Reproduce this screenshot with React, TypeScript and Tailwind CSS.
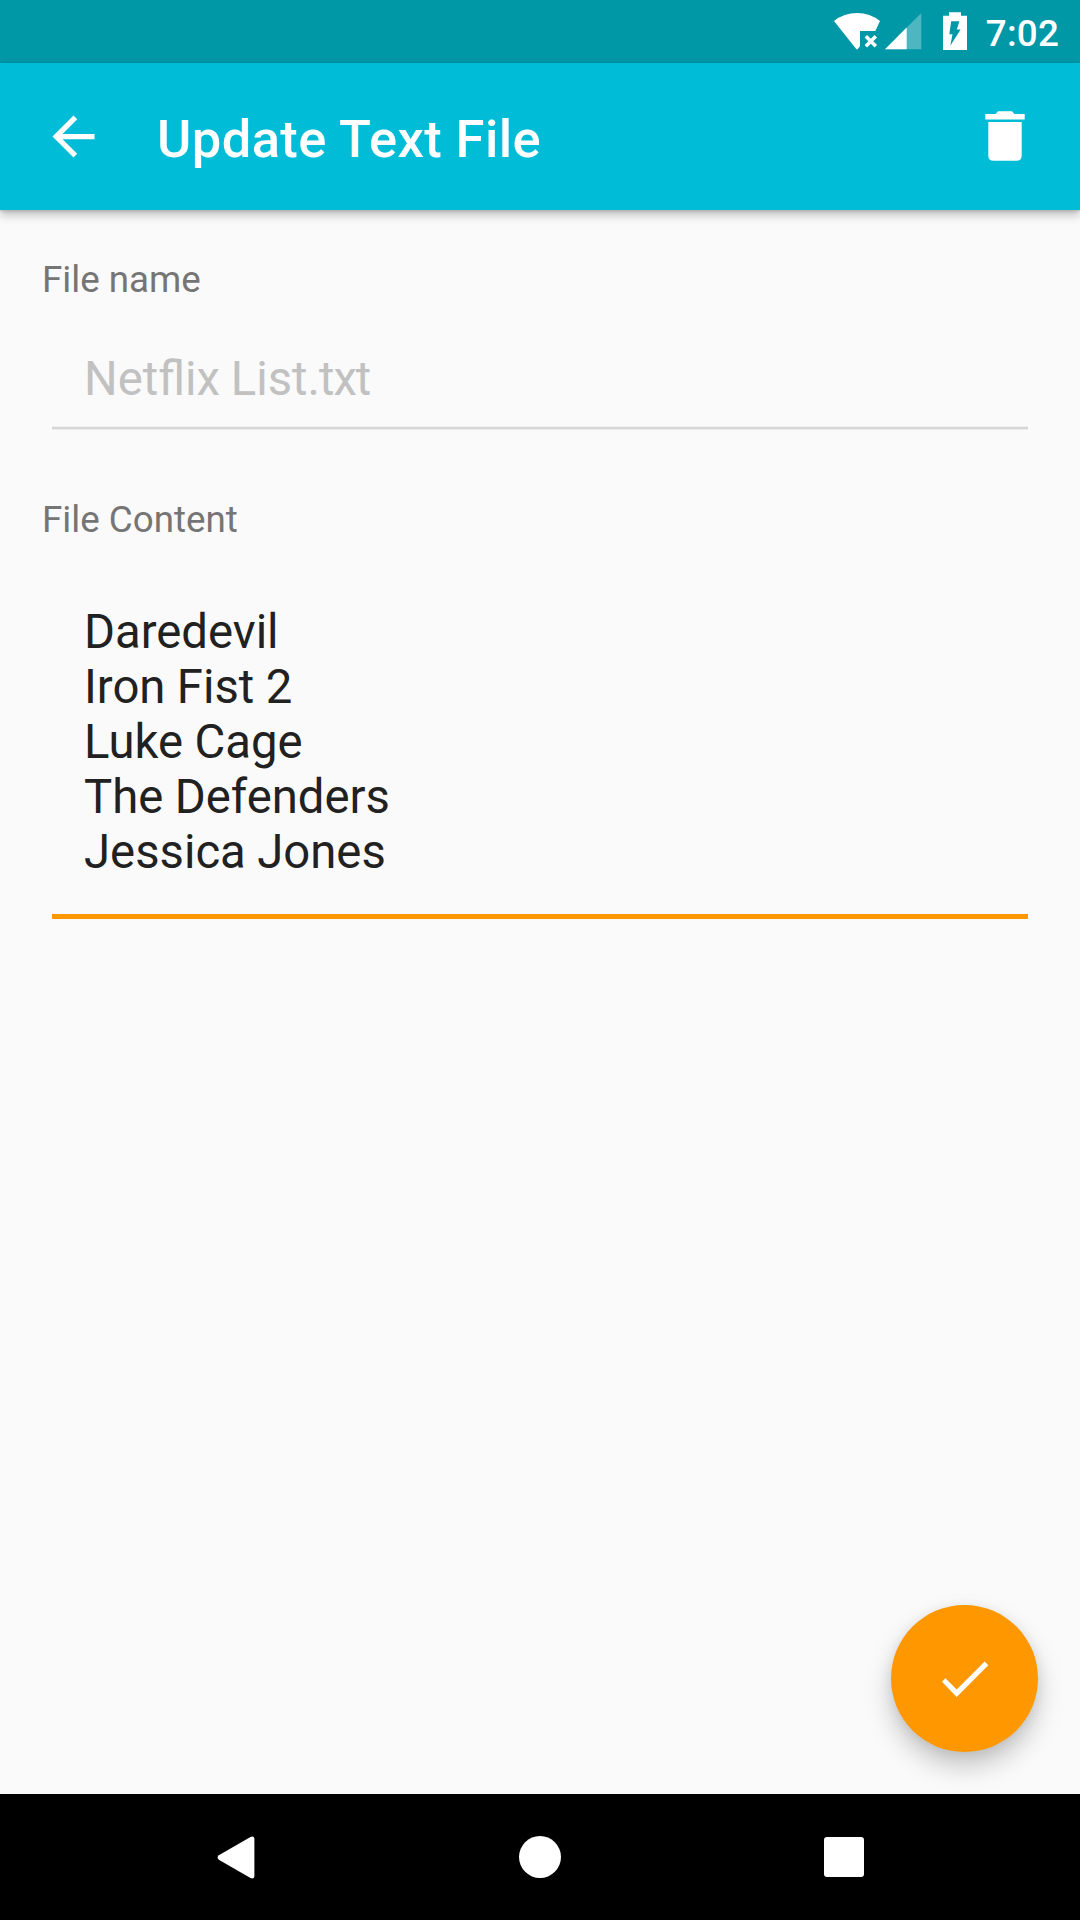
const titles = ["Daredevil", "Iron Fist 2", "Luke Cage", "The Defenders", "Jessica Jones"];

function StatusBar() {
  return (
    <div className="flex h-[63px] shrink-0 items-start justify-end bg-[#0097a7] pr-[21px] text-white">
      <svg className="h-[63px] w-[150px]" viewBox="826 0 150 63" fill="currentColor">
        <path d="M834 21Q844 13 857 13T880 21L875.3 31H860V46.3L858 48.8Q857 50 856 48.8Z" />
        <path d="M865.8 36.3l10 10m0-10l-10 10" stroke="currentColor" strokeWidth="3.5" fill="none" />
        <path d="M885 49.3L921.3 13V49.3Z" opacity="0.3" />
        <path d="M885 49.3L906.7 27.6V49.3Z" />
        <path
          fillRule="evenodd"
          d="M949 12.3h12v3.4h6V50h-24V15.7h6ZM951.2 21.2L949.3 34.3H952.5L950.3 45.8L960.6 29.6H956.8L959.4 21.2Z"
        />
      </svg>
      <span className="ml-[10px] text-[36.75px] leading-[67px] font-medium tracking-[0.2px]">7:02</span>
    </div>
  );
}

function AppBar() {
  return (
    <header className="relative z-10 flex h-[147px] shrink-0 items-center bg-[#00bcd7] pr-[42px] pl-[42px] text-white shadow-[0_5px_9px_rgba(0,0,0,0.24),0_1px_3px_rgba(0,0,0,0.16)]">
      <button aria-label="Back" className="size-[63px]">
        <svg className="size-[63px]" viewBox="0 0 24 24" fill="currentColor">
          <path d="M20 11H7.83l5.59-5.59L12 4l-8 8 8 8 1.41-1.41L7.83 13H20v-2z" />
        </svg>
      </button>
      <h1 className="ml-[52px] flex-1 pt-[5px] text-[52.5px] leading-[62px] font-medium tracking-[0.4px]">Update Text File</h1>
      <button aria-label="Delete" className="size-[66px]">
        <svg className="size-[66px]" viewBox="972 104 66 66" fill="currentColor">
          <path d="M985.3 114H995.5L998 111.2H1012L1014.5 114H1024.7V119.6H985.3Z" />
          <path d="M988.3 122H1021.7V155.5Q1021.7 160.8 1016.4 160.8H993.6Q988.3 160.8 988.3 155.5Z" />
        </svg>
      </button>
    </header>
  );
}

function NavBar() {
  return (
    <nav className="flex h-[126px] shrink-0 items-center justify-between bg-black px-[205px] text-white">
      <svg className="size-[63px]" viewBox="205 1825.5 63 63" fill="currentColor">
        <path d="M218.8 1854.8L250.5 1836.5Q254.4 1835 254.4 1839V1875Q254.4 1879 250.5 1877.5L218.8 1859.2Q216.4 1857 218.8 1854.8Z" />
      </svg>
      <span className="size-[42px] rounded-full bg-white" />
      <span className="flex w-[63px] justify-center">
        <span className="size-[40px] rounded-[3px] bg-white" />
      </span>
    </nav>
  );
}

export default function App() {
  return (
    <div className="flex h-[1920px] w-[1080px] flex-col overflow-hidden bg-[#fafafa] font-['Roboto',sans-serif]">
      <StatusBar />
      <AppBar />
      <main className="relative flex-1 px-[42px] pt-[48px]">
        <div className="text-[36.75px] leading-[43px] text-[#757575]">File name</div>
        <div className="mx-[10px] mt-[51px] border-b-2 border-[#d6d6d6] pb-[20px] pl-[32px] text-[47.25px] leading-[55px] text-[#c1c1c1] shadow-[0_1px_0_#ececec,inset_0_-1px_0_#f0f0f0] [word-spacing:-1px]">
          Netflix List<span className="tracking-[-1px]">.txt</span>
        </div>
        <div className="mt-[69px] text-[36.75px] leading-[43px] text-[#757575]">File Content</div>
        <div className="mx-[10px] mt-[64px] border-b-5 border-[#ff9800] pb-[34px] pl-[32px] text-[47.25px] leading-[55px] text-[#212121] [word-spacing:-0.3px]">
          {titles.map((title) => (
            <div key={title}>{title}</div>
          ))}
        </div>
        <button
          aria-label="Save"
          className="absolute right-[42px] bottom-[42px] size-[147px] rounded-full bg-[#ff9800] text-white shadow-[0_14px_26px_rgba(0,0,0,0.22),0_2px_12px_rgba(0,0,0,0.07)]"
        >
          <svg className="size-[147px]" viewBox="891 1605 147 147" fill="currentColor">
            <path d="M942 1681.7L945.4 1678.3L956.7 1689.6L984.7 1661.6L988.3 1665.2L956.7 1697Z" />
          </svg>
        </button>
      </main>
      <NavBar />
    </div>
  );
}
